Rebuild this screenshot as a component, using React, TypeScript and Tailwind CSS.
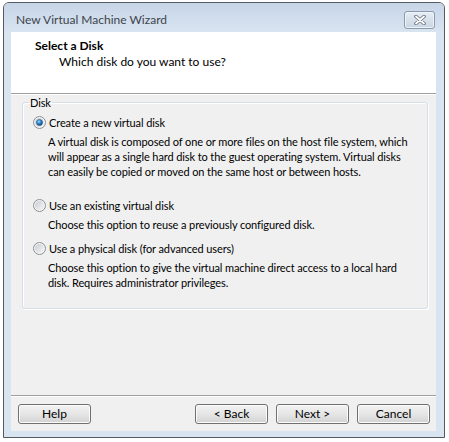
import React from 'react';

const font = { fontFamily: 'Lato, "Noto Sans", sans-serif' };

const Radio: React.FC<{ checked?: boolean; id: string }> = ({ checked, id }) => (
  <svg width="13" height="13" viewBox="0 0 13 13" className="shrink-0">
    <defs>
      <linearGradient id={`${id}-bg`} x1="0" y1="0" x2="1" y2="1">
        <stop offset="0" stopColor="#c8ccd2" />
        <stop offset="1" stopColor="#f7f7f7" />
      </linearGradient>
      <radialGradient id={`${id}-dot`} cx="0.4" cy="0.35" r="0.7">
        <stop offset="0" stopColor="#9bd8ff" />
        <stop offset="0.45" stopColor="#2f8ad4" />
        <stop offset="1" stopColor="#0d3c6c" />
      </radialGradient>
    </defs>
    <circle cx="6.5" cy="6.5" r="6" fill="#f4f4f4" stroke="#8c8f93" />
    <circle cx="6.5" cy="6.5" r="4.6" fill={`url(#${id}-bg)`} />
    {checked && <circle cx="6.5" cy="6.5" r="3.1" fill={`url(#${id}-dot)`} stroke="#1d4f80" strokeWidth="0.5" />}
  </svg>
);

const Button: React.FC<{ label: string }> = ({ label }) => (
  <button className="w-[73px] h-[20px] rounded-[3px] border border-[#707070] bg-gradient-to-b from-[#f2f2f2] via-[#e6e6e6] to-[#d2d2d2] text-[12px] leading-[16px] text-black shadow-[inset_0_0_0_1px_#fcfcfc]">
    {label}
  </button>
);

const CloseButton: React.FC = () => (
  <div className="w-[31px] h-[18px] rounded-[3px] border border-[#8d9aab] bg-gradient-to-b from-[#e6edf5] to-[#c9d5e3] flex items-center justify-center shadow-[inset_0_0_0_1px_#eef3f9]">
    <svg width="14" height="10" viewBox="0 0 14 10">
      <path d="M3 1.5 L11 8.5 M11 1.5 L3 8.5" stroke="#6b7480" strokeWidth="3.6" strokeLinecap="round" />
      <path d="M3 1.5 L11 8.5 M11 1.5 L3 8.5" stroke="#ffffff" strokeWidth="1.8" strokeLinecap="round" />
    </svg>
  </div>
);

const App: React.FC = () => {
  return (
    <div className="w-[449px] h-[442px] bg-white pt-[2px] pl-[3px]" style={font}>
      <div className="w-[442px] h-[436px] border border-[#555b62] rounded-t-[6px] bg-[#d9e4f1] flex flex-col">
        {/* Title bar */}
        <div className="h-[29px] flex items-center justify-between pt-[4px] pl-[12px] pr-[9px] rounded-t-[5px] bg-gradient-to-b from-[#c6d5e7] to-[#d9e4f1]">
          <span className="text-[12px] text-[#3d444b]">New Virtual Machine Wizard</span>
          <CloseButton />
        </div>

        {/* Client area */}
        <div className="ml-[7px] mr-[8px] h-[399px] flex flex-col bg-[#f0f0f0] text-[11px] leading-[15px] tracking-[-0.1px] text-black">
          {/* Header */}
          <div className="h-[61px] bg-white pt-[6px] pl-[24px] text-[12px] leading-[16px] tracking-normal">
            <div className="font-bold">Select a Disk</div>
            <div className="pl-[24px]">Which disk do you want to use?</div>
          </div>
          <div className="h-px bg-[#a0a0a0]" />
          <div className="h-px bg-white" />

          {/* Body */}
          <div className="h-[300px]">
            <fieldset className="ml-[11px] w-[406px] min-w-0 border border-[#d5dfe5] rounded-[3px] px-[6px] pt-[5px] pb-[18px] shadow-[inset_1px_1px_0_#ffffff,1px_1px_0_#ffffff]">
              <legend className="px-[1px] leading-[15px]">Disk</legend>
              <div className="pl-[4px]">
                <div className="flex items-center h-[15px] gap-[3px]">
                  <Radio checked id="r1" />
                  <span>Create a new virtual disk</span>
                </div>
                <div className="mt-[4px] pl-[15px] whitespace-nowrap">
                  <div>A virtual disk is composed of one or more files on the host file system, which</div>
                  <div>will appear as a single hard disk to the guest operating system. Virtual disks</div>
                  <div>can easily be copied or moved on the same host or between hosts.</div>
                </div>

                <div className="mt-[19px] flex items-center h-[15px] gap-[3px]">
                  <Radio id="r2" />
                  <span>Use an existing virtual disk</span>
                </div>
                <div className="mt-[4px] pl-[15px] whitespace-nowrap">
                  <div>Choose this option to reuse a previously configured disk.</div>
                </div>

                <div className="mt-[9px] flex items-center h-[15px] gap-[3px]">
                  <Radio id="r3" />
                  <span>Use a physical disk (for advanced users)</span>
                </div>
                <div className="mt-[4px] pl-[15px] whitespace-nowrap">
                  <div>Choose this option to give the virtual machine direct access to a local hard</div>
                  <div>disk. Requires administrator privileges.</div>
                </div>
              </div>
            </fieldset>
          </div>

          {/* Footer */}
          <div className="h-px bg-[#a0a0a0]" />
          <div className="h-px bg-white" />
          <div className="flex-1 flex pt-[7px] pl-[7px] pr-[6px] tracking-normal">
            <Button label="Help" />
            <div className="flex-1" />
            <div className="flex gap-[8px]">
              <Button label="< Back" />
              <Button label="Next >" />
              <Button label="Cancel" />
            </div>
          </div>
        </div>
      </div>
    </div>
  );
};

export default App;
